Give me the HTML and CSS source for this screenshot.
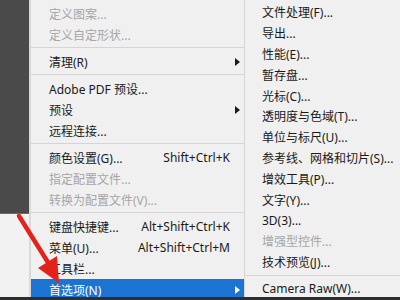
FILE: index.html
```html
<!DOCTYPE html>
<html lang="zh-CN">
<head>
    <meta charset="UTF-8">
    <title>首选项菜单</title>
    <link rel="stylesheet" href="styles.css">
</head>
<body>
    <div class="screen">
        <div class="sidebar">
            <div class="sidebar-top"></div>
            <div class="sidebar-bottom"></div>
        </div>

        <div class="menu main">
            <div class="list">
                <div class="item off"><span class="label">定义画笔预设(B)...</span></div>
                <div class="item off"><span class="label">定义图案...</span></div>
                <div class="item off"><span class="label">定义自定形状...</span></div>
                <div class="sep"></div>
                <div class="item"><span class="label">清理(R)</span><span class="more"></span></div>
                <div class="sep"></div>
                <div class="item"><span class="label">Adobe PDF 预设...</span></div>
                <div class="item"><span class="label">预设</span><span class="more"></span></div>
                <div class="item"><span class="label">远程连接...</span></div>
                <div class="sep"></div>
                <div class="item"><span class="label">颜色设置(G)...</span><span class="key">Shift+Ctrl+K</span></div>
                <div class="item off"><span class="label">指定配置文件...</span></div>
                <div class="item off"><span class="label">转换为配置文件(V)...</span></div>
                <div class="sep"></div>
                <div class="item"><span class="label">键盘快捷键...</span><span class="key">Alt+Shift+Ctrl+K</span></div>
                <div class="item"><span class="label">菜单(U)...</span><span class="key">Alt+Shift+Ctrl+M</span></div>
                <div class="item"><span class="label">工具栏...</span></div>
                <div class="item active"><span class="label">首选项(N)</span><span class="more"></span></div>
            </div>
        </div>

        <div class="menu sub">
            <div class="list">
                <div class="item"><span class="label">文件处理(F)...</span></div>
                <div class="item"><span class="label">导出...</span></div>
                <div class="item"><span class="label">性能(E)...</span></div>
                <div class="item"><span class="label">暂存盘...</span></div>
                <div class="item"><span class="label">光标(C)...</span></div>
                <div class="item"><span class="label">透明度与色域(T)...</span></div>
                <div class="item"><span class="label">单位与标尺(U)...</span></div>
                <div class="item"><span class="label">参考线、网格和切片(S)...</span></div>
                <div class="item"><span class="label">增效工具(P)...</span></div>
                <div class="item"><span class="label">文字(Y)...</span></div>
                <div class="item"><span class="label">3D(3)...</span></div>
                <div class="item off"><span class="label">增强型控件...</span></div>
                <div class="item"><span class="label">技术预览(J)...</span></div>
                <div class="sep"></div>
                <div class="item"><span class="label">Camera Raw(W)...</span></div>
            </div>
        </div>

        <!-- red annotation arrow drawn over the menu -->
        <svg class="pointer" width="80" height="300" viewBox="0 0 80 300">
            <line x1="19" y1="216" x2="49" y2="264" stroke="#e3231b" stroke-width="4.5" stroke-linecap="round"/>
            <polygon points="59,283 38,268 57,256" fill="#e3231b"/>
        </svg>
    </div>
</body>
</html>
```

FILE: styles.css
```css
* {
    margin: 0;
    padding: 0;
    box-sizing: border-box;
}
body {
    width: 400px;
    height: 300px;
    overflow: hidden;
    background-color: #2e2e2e;
    font-family: "Noto Sans", "Noto Sans CJK SC", sans-serif;
    font-size: 12px;
    color: #1a1a1a;
}
.screen {
    position: relative;
    display: flex;
    height: 297px;
    overflow: hidden;
}
.sidebar {
    flex-shrink: 0;
    width: 31px;
    display: flex;
    flex-direction: column;
    border-right: 2px solid #d9d9d9;
}
.sidebar-top {
    height: 214px;
    background-color: #4a4a4a;
    border-bottom: 1px solid #6a6a6a;
}
.sidebar-bottom {
    flex-grow: 1;
    background-color: #f2f2f2;
}
.menu {
    background-color: #f0f0f0;
    overflow: hidden;
}
.main {
    flex-shrink: 0;
    width: 213px;
}
.main .list {
    margin-top: -18px;
}
.sub {
    flex-grow: 1;
    min-width: 0;
    border-left: 1px solid #d6d6d6;
}
.sub .list {
    padding-top: 2px;
}
.item {
    display: flex;
    align-items: center;
    height: 21px;
    padding-left: 18px;
    padding-right: 14px;
    white-space: nowrap;
    position: relative;
}
.sub .item {
    height: 20.8px;
    padding-left: 17px;
}
.item .label {
    flex-grow: 1;
}
.item.off {
    color: #a6a6a6;
}
.item.active {
    background-color: #1c74d2;
    color: #ffffff;
}
.key {
    text-align: right;
}
.more {
    position: absolute;
    right: 4px;
    top: 50%;
    margin-top: -4px;
    width: 0;
    height: 0;
    border-top: 4px solid transparent;
    border-bottom: 4px solid transparent;
    border-left: 5px solid #1a1a1a;
}
.active .more {
    border-left-color: #ffffff;
}
.sep {
    height: 1px;
    margin: 2px 0 3px;
    background-color: #d4d4d4;
}
.sub .sep {
    margin: 3px 0 2px;
}
.pointer {
    position: absolute;
    left: 0;
    top: 0;
}
```
